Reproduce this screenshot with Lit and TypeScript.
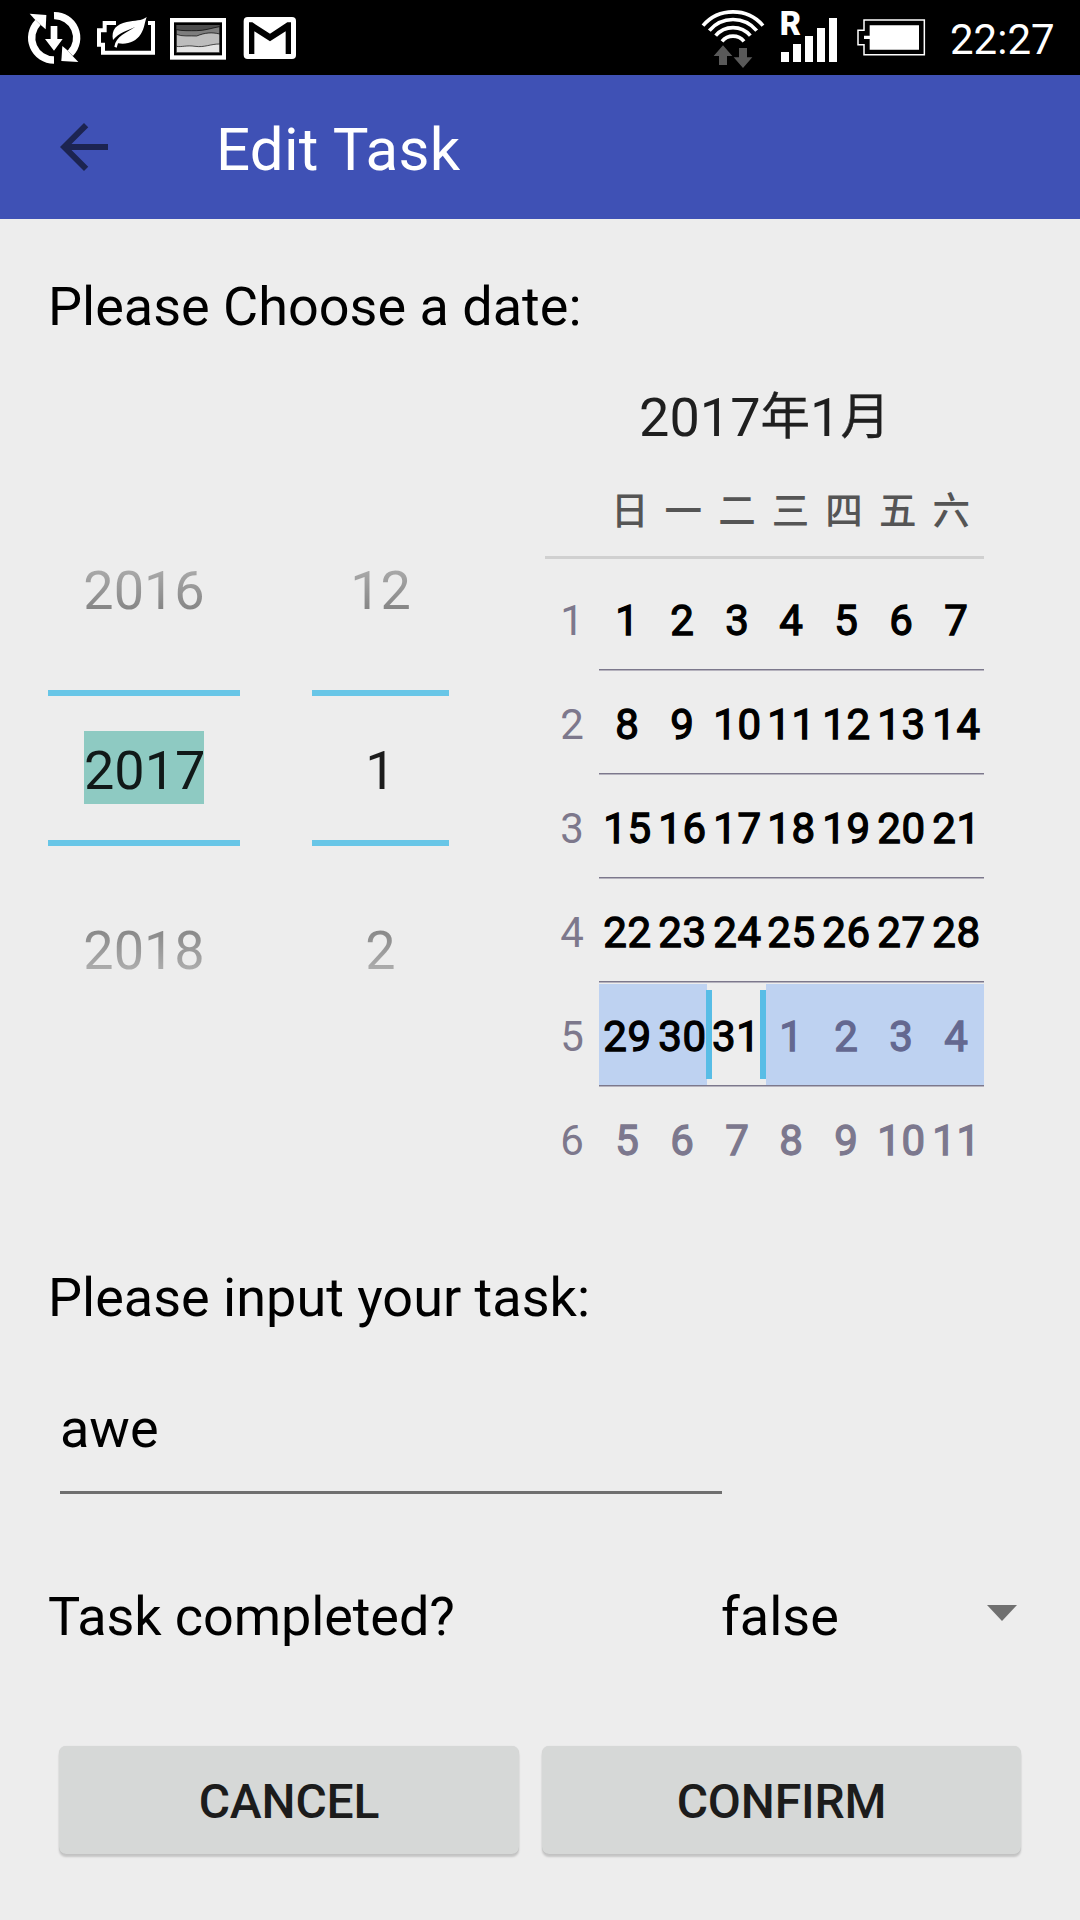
import { LitElement, html, css } from "lit";
import { customElement, property } from "lit/decorators.js";
import { classMap } from "lit/directives/class-map.js";

@customElement("status-bar")
class StatusBar extends LitElement {
  static styles = css`
    :host {
      display: flex;
      height: 75px;
      box-sizing: border-box;
      background: #000;
      color: #fff;
      font: 400 42px/75px Roboto, "Liberation Sans", sans-serif;
    }
    .group {
      display: flex;
      align-items: flex-start;
    }
    .left {
      padding-left: 24px;
    }
    .right {
      margin-left: auto;
      padding-right: 24px;
    }
    svg {
      display: block;
      flex: none;
    }
    .clock {
      height: 75px;
      line-height: 79px;
      width: 106px;
      white-space: nowrap;
    }
    .carrier {
      font: 900 98px Roboto, sans-serif;
    }
  `;

  // Icon geometry is drawn on a grid three times finer than the pixel size.
  render() {
    return html`
      <div class="group left">
        <svg width="60" height="75" viewBox="72 0 180 225">
          <g fill="none" stroke="#fff" stroke-width="22">
            <path d="M162 47A66.5 66.5 0 0 1 211 160" />
            <path d="M162 180A66.5 66.5 0 0 1 114 67" />
          </g>
          <g fill="#fff">
            <path d="M89 41L139 45L137 88L123 76L104 58Z" />
            <path d="M235 186L184 183L187 138L202 151L220 170Z" />
            <path d="M152 78H172V117H188L162 152L135 117H152Z" />
          </g>
        </svg>
        <svg width="80" height="75" viewBox="252 0 240 225">
          <path
            d="M348 69H314V91H297V134H309V158H459V69H444"
            fill="none"
            stroke="#fff"
            stroke-width="12"
          />
          <path
            d="M440 51C425 63 405 61 380 66C350 73 333 88 339 120C358 97 382 92 406 80C379 98 348 108 343 140L350 143L354 130C382 135 408 125 422 103C434 85 434 66 440 51Z"
            fill="#fff"
            stroke="#000"
            stroke-width="7"
            paint-order="stroke"
          />
        </svg>
        <svg width="70" height="75" viewBox="492 0 210 225">
          <rect x="510" y="54" width="168" height="125" fill="#fff" />
          <rect x="522" y="67" width="144" height="99" fill="#000" />
          <rect x="529" y="75" width="130" height="83" fill="#4d4d4d" />
          <path d="M529 89C545 93 570 92 590 92C615 92 635 84 659 80V158H529Z" fill="#7d7d7d" stroke="#000" stroke-width="2" />
          <path d="M529 103C545 110 570 107 590 108C615 98 635 96 659 102V158H529Z" fill="#bdbdbd" stroke="#000" stroke-width="2" />
          <path d="M529 139C545 142 560 135 585 139C615 143 630 132 659 132V158H529Z" fill="#e4e4e4" stroke="#000" stroke-width="2" />
        </svg>
        <svg width="70" height="75" viewBox="702 0 210 225">
          <rect x="731" y="51" width="157" height="126" rx="12" fill="#fff" />
          <path d="M747 162V67H757L810 101L862 67H873V162H857V94L810 124L763 94V162Z" fill="#000" />
        </svg>
      </div>
      <div class="group right">
        <svg width="72" height="75" viewBox="54 0 216 225">
          <g fill="none" stroke="#fff" stroke-width="11">
            <path d="M69 77A119 119 0 0 1 249 77" />
            <path d="M88 92A92 92 0 0 1 230 92" />
            <path d="M107 107A68 68 0 0 1 211 107" />
            <path d="M126 124A43 43 0 0 1 192 124" />
          </g>
          <path d="M129 136L157 168H141V195H117V168H101ZM189 204L161 172H177V144H201V172H217Z" fill="#595959" />
        </svg>
        <svg width="82" height="75" viewBox="270 0 246 225">
          <text class="carrier" x="299" y="104" fill="#fff">R</text>
          <path d="M303 156H327V186H303ZM339 132H363V186H339ZM375 108H399V186H375ZM411 84H435V186H411ZM447 54H471V186H447Z" fill="#fff" />
        </svg>
        <svg width="98" height="75" viewBox="516 0 294 225">
          <path d="M552 60H733V164H552V134H534V91H552Z" fill="none" stroke="#fff" stroke-width="4.5" />
          <path d="M569 76H717V149H569V117H552V107H569Z" fill="#fff" />
        </svg>
        <span class="clock">22:27</span>
      </div>
    `;
  }
}

@customElement("wheel-picker")
class WheelPicker extends LitElement {
  @property() previous = "";
  @property() current = "";
  @property() next = "";
  @property({ type: Boolean }) highlighted = false;

  static styles = css`
    :host {
      display: block;
      text-align: center;
      color: #1c1c1c;
      font: 400 54px/72px Roboto, "Liberation Sans", sans-serif;
    }
    .faded {
      color: transparent;
      -webkit-background-clip: text;
      background-clip: text;
    }
    .before {
      background-image: linear-gradient(#bdbdbd, #a9a9a9 15px, #868686 54px, #808080);
    }
    .after {
      background-image: linear-gradient(#808080, #888 15px, #acacac 54px, #b8b8b8);
    }
    .selected {
      box-sizing: border-box;
      height: 156px;
      margin: 63px 0 69px;
      padding-top: 35px;
      border: solid #68c6e7;
      border-width: 6px 0;
    }
    .value {
      display: inline-block;
      padding-top: 6px;
      line-height: 67px;
      width: 120px;
      white-space: nowrap;
    }
    .marked {
      background: #8ecac2;
      color: #111918;
    }
  `;

  render() {
    return html`
      <div class="faded before">${this.previous}</div>
      <div class="selected">
        <span class=${classMap({ value: true, marked: this.highlighted })}>${this.current}</span>
      </div>
      <div class="faded after">${this.next}</div>
    `;
  }
}

@customElement("month-calendar")
class MonthCalendar extends LitElement {
  private days = ["日", "一", "二", "三", "四", "五", "六"];
  private first = 1;
  private length = 31;
  private chosen = 31;

  static styles = css`
    :host {
      display: block;
      width: 439px;
      font-family: Roboto, "Noto Sans CJK SC", sans-serif;
    }
    .title {
      height: 72px;
      font-size: 54px;
      line-height: 72px;
      text-align: center;
      color: #1f1f1f;
      white-space: nowrap;
    }
    .han {
      font-size: 49.5px;
      line-height: 0;
      vertical-align: 2px;
      -webkit-text-stroke: 0.4px currentColor;
    }
    .names {
      display: grid;
      grid-template-columns: repeat(7, 1fr);
      height: 102px;
      padding: 0 6px 0 58px;
      box-sizing: border-box;
      font: 500 37.5px/108px "Noto Sans CJK SC", sans-serif;
      text-align: center;
      color: #555;
    }
    .rule {
      height: 3px;
      margin-bottom: 8px;
      background: #d0d0d0;
    }
    .week {
      display: grid;
      grid-template-columns: 54px 1fr;
      height: 104px;
      font-size: 42px;
      line-height: 107px;
      text-align: center;
    }
    .number {
      color: #7d788c;
    }
    .cells {
      display: grid;
      grid-template-columns: repeat(7, 55px);
      box-sizing: border-box;
      height: 104px;
      border-bottom: 1px solid #b6b3be;
      box-shadow: inset 0 -1px #7c788c;
    }
    .last .cells {
      border-color: transparent;
      box-shadow: none;
    }
    .day {
      color: #000;
      letter-spacing: 0.7px;
      white-space: nowrap;
      -webkit-text-stroke: 1.3px currentColor;
    }
    .day:nth-child(-n + 3) {
      text-indent: 2px;
    }
    .outside {
      color: #7c788e;
    }
    .current .day {
      height: 101px;
      margin-top: 1px;
      line-height: 105px;
      background: #bed2f1;
    }
    .current .outside {
      color: #646890;
    }
    .current .chosen {
      box-sizing: border-box;
      height: 89px;
      margin: 7px -2px 0 -3px;
      line-height: 93px;
      border: solid #58bde6;
      border-width: 0 6px;
      background: none;
      text-indent: 0;
    }
    .current .before {
      margin-right: 2px;
      text-indent: 4px;
    }
    .current .following {
      margin-left: 2px;
      text-indent: -2px;
    }
  `;

  private renderWeek(week: number) {
    const start = this.first + week * 7;
    const dates = this.days.map((_, i) => start + i);
    const current = dates.includes(this.chosen);
    return html`
      <div class=${classMap({ week: true, current, last: week === 5 })}>
        <span class="number">${week + 1}</span>
        <div class="cells">
          ${dates.map(
            (date) => html`<span
              class=${classMap({
                day: true,
                outside: date > this.length,
                chosen: date === this.chosen,
                before: date === this.chosen - 1,
                following: date === this.chosen + 1,
              })}
              >${date > this.length ? date - this.length : date}</span
            >`
          )}
        </div>
      </div>
    `;
  }

  render() {
    return html`
      <div class="title">2017<span class="han">年</span>1<span class="han">月</span></div>
      <div class="names">${this.days.map((d) => html`<span>${d}</span>`)}</div>
      <div class="rule"></div>
      ${[0, 1, 2, 3, 4, 5].map((w) => this.renderWeek(w))}
    `;
  }
}

@customElement("app-root")
class AppRoot extends LitElement {
  static styles = css`
    :host {
      display: flex;
      flex-direction: column;
      width: 1080px;
      height: 1920px;
      overflow: hidden;
      background: #ededed;
      color: #000;
      font: 400 54px/72px Roboto, "Liberation Sans", sans-serif;
    }
    .toolbar {
      display: flex;
      align-items: center;
      height: 144px;
      padding-left: 48px;
      background: #3f51b5;
      color: #fff;
      font-size: 60px;
    }
    .title {
      margin: 5px 0 0 96px;
      letter-spacing: 0.3px;
    }
    .form {
      display: flex;
      flex-direction: column;
      padding: 52px 48px 0;
    }
    .picker {
      display: flex;
      align-items: flex-start;
      height: 848px;
    }
    .year {
      width: 192px;
      margin-top: 212px;
    }
    .month {
      width: 137px;
      margin: 212px 0 0 72px;
    }
    .calendar {
      margin: 39px 0 0 96px;
    }
    .task-label {
      margin-top: 71px;
    }
    .field {
      box-sizing: border-box;
      width: 662px;
      height: 101px;
      margin: 59px 0 0 12px;
      border-bottom: 3px solid #6f6f6f;
    }
    .state {
      display: flex;
      align-items: flex-start;
      height: 72px;
      margin-top: 87px;
    }
    .question {
      width: 673px;
      letter-spacing: -0.09px;
    }
    .choice {
      display: flex;
      justify-content: space-between;
      width: 296px;
    }
    .caret {
      margin-top: 24px;
    }
    .actions {
      display: flex;
      gap: 23px;
      margin: 93px 11px 0;
    }
    .button {
      width: 460px;
      height: 108px;
      padding: 0;
      border: 0;
      border-radius: 7px;
      background: #d6d8d7;
      box-shadow: 0 3px 2px rgba(0, 0, 0, 0.17), 0 0 1px rgba(0, 0, 0, 0.12);
      color: #1c1c1c;
      font: 500 48px/112px Roboto, "Liberation Sans", sans-serif;
      letter-spacing: -0.15px;
    }
    .wide {
      width: 479px;
    }
  `;

  render() {
    return html`
      <status-bar></status-bar>
      <header class="toolbar">
        <svg width="72" height="72" viewBox="0 0 24 24">
          <path d="M20 11H7.83l5.59-5.59L12 4l-8 8 8 8 1.41-1.41L7.83 13H20v-2z" fill="#1c2451" />
        </svg>
        <span class="title">Edit Task</span>
      </header>
      <main class="form">
        <div>Please Choose a date:</div>
        <section class="picker">
          <wheel-picker class="year" previous="2016" current="2017" next="2018" highlighted></wheel-picker>
          <wheel-picker class="month" previous="12" current="1" next="2"></wheel-picker>
          <month-calendar class="calendar"></month-calendar>
        </section>
        <div class="task-label">Please input your task:</div>
        <div class="field">awe</div>
        <div class="state">
          <span class="question">Task completed?</span>
          <div class="choice">
            <span>false</span>
            <svg class="caret" width="30" height="16" viewBox="0 0 30 16">
              <path d="M0 0H30L15 16Z" fill="#707070" />
            </svg>
          </div>
        </div>
        <div class="actions">
          <button class="button">CANCEL</button>
          <button class="button wide">CONFIRM</button>
        </div>
      </main>
    `;
  }
}
